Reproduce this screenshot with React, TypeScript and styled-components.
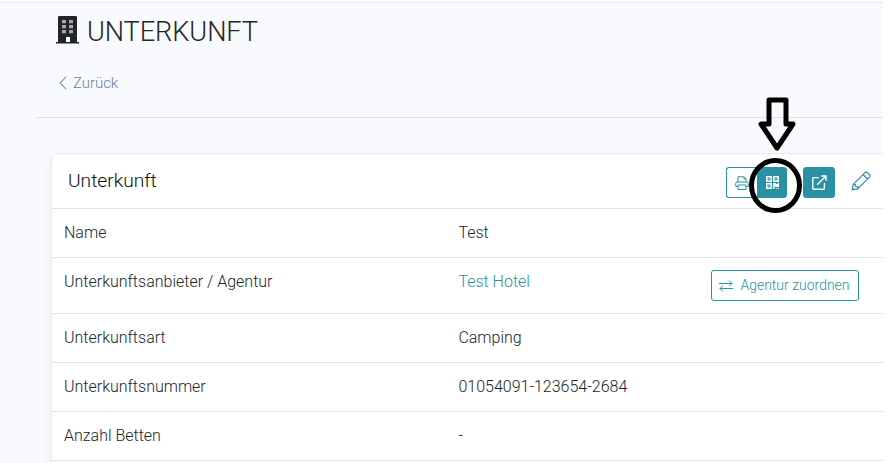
import React from 'react';
import styled, { createGlobalStyle, css } from 'styled-components';
import { BsChevronLeft } from 'react-icons/bs';

const teal = '#2a91a5';
const line = '#dee2e6';

const GlobalStyle = createGlobalStyle`
  * { box-sizing: border-box; }
  body {
    margin: 0;
    background: #fff;
    color: #212529;
    font: 300 16px/24px Roboto, sans-serif;
    overflow: hidden;
  }
`;

const Page = styled.main`
  width: 883px;
  height: 463px;
  padding: 2px 0 0 36px;
  background: linear-gradient(#e1e9f4 0 1px, #f9fafd 1px) 0 2px no-repeat, #f9fafd;
  overflow: hidden;
`;

const Heading = styled.h1`
  display: flex;
  align-items: center;
  gap: 8px;
  height: 56px;
  margin: 0;
  padding-left: 20px;
  font-size: 27.2px;
  font-weight: 300;
  line-height: 34px;
  svg { flex: none; }
`;

const HeadingText = styled.span`
  padding-top: 3px;
  letter-spacing: -0.1px;
`;

const BackBar = styled.nav`
  display: flex;
  height: 60px;
  padding: 13px 0 0 19px;
  border-bottom: 1px solid ${line};
`;

const BackLink = styled.a`
  display: flex;
  align-items: center;
  gap: 2px;
  height: 24px;
  color: #6b7f9e;
  font-size: 15px;
  letter-spacing: -0.05px;
`;

const Card = styled.section`
  position: relative;
  margin: 35px -10px 0 15px;
  height: 330px;
  border: 1px solid #e3eaf4;
  border-radius: 6px 0 0 0;
  background: #fff;
  box-shadow: 0 7px 14px rgba(65, 69, 88, 0.06), 0 3px 6px rgba(0, 0, 0, 0.02);
`;

const CardHeader = styled.header`
  display: flex;
  justify-content: space-between;
  height: 55px;
  padding: 13px 21px 0 16px;
  border-bottom: 1px solid ${line};
`;

const CardTitle = styled.h2`
  margin: 2px 0 0;
  font-size: 19.2px;
  font-weight: 300;
  line-height: 24px;
  color: #0b0b0b;
`;

const Actions = styled.div`
  display: flex;
  align-items: flex-start;
`;

const button = css`
  display: flex;
  align-items: center;
  justify-content: center;
  height: 31px;
  padding: 0;
  border: 1px solid ${teal};
  border-radius: 3px;
  font: 300 14px/21px Roboto, sans-serif;
`;

const IconButton = styled.button<{ $filled?: boolean; $joined?: 'left' | 'right' }>`
  ${button}
  width: ${p => (p.$joined === 'right' ? 30 : p.$joined === 'left' ? 31 : 32)}px;
  color: ${p => (p.$filled ? '#fff' : teal)};
  background: ${p => (p.$filled ? teal : '#fff')};
  ${p => p.$joined === 'left' && 'border-radius: 3px 0 0 3px; border-right: 0;'}
  ${p => p.$joined === 'right' && 'border-radius: 0 3px 3px 0; margin-right: 16px;'}
`;

const EditButton = styled.button`
  display: flex;
  margin: 4px 0 0 16px;
  padding: 0;
  border: 0;
  background: none;
  color: ${teal};
`;

const Row = styled.div<{ $tall?: boolean }>`
  display: grid;
  grid-template-columns: 394.4px 252.6px 148px;
  align-items: start;
  height: ${p => (p.$tall ? 56 : 49)}px;
  padding: 12px 0 0 12px;
  border-bottom: 1px solid ${line};
`;

const Value = styled.span<{ $link?: boolean }>`
  color: ${p => (p.$link ? teal : 'inherit')};
`;

const AssignButton = styled.button`
  ${button}
  gap: 6px;
  width: 148px;
  padding-right: 2px;
  color: ${teal};
  background: #fff;
`;

const Annotation = styled.svg`
  position: absolute;
  left: 696px;
  top: -60px;
  pointer-events: none;
`;

const BuildingIcon = () => (
  <svg width="23" height="28" viewBox="0 0 23 28">
    <path fill="#212529" d="M2 1q0-1 1-1h17q1 0 1 1v25h2v1.5H0V26h2z" />
    <path fill="#fff" d="M10 21h4v5h-4z" />
    <path fill="#a9a6a4" d="M6 4h4v3.2H6zM13 4h4v3.2h-4zM6 9h4v3.2H6zM13 9h4v3.2h-4zM6 14h4v3.2H6zM13 14h4v3.2h-4z" />
  </svg>
);

const PrinterIcon = () => (
  <svg width="14" height="14" viewBox="0 0 14 14" fill="none" stroke="currentColor" strokeWidth="1">
    <path d="M3 6V.8h6l2 2V6M9 .8v2h2M3 10.5H.8V7.3q0-1.3 1.3-1.3h9.8q1.3 0 1.3 1.3v3.2H11M3 9h8v4.5H3z" />
  </svg>
);

const QrIcon = () => (
  <svg width="13" height="13" viewBox="0 0 13 13" fill="none" stroke="currentColor">
    <path strokeWidth="1.5" d="M.8.8h4.4v4.4H.8zM7.8.8h4.4v4.4H7.8zM.8 7.8h4.4v4.4H.8z" />
    <path fill="currentColor" stroke="none" d="M2.5 2.5h1v1h-1zM9.5 2.5h1v1h-1zM2.5 9.5h1v1h-1zM7 7h3v1h1.5V7H13v4H9.2v-.8h-.7V13H7zM10 11.9h1V13h-1zM12 11.9h1V13h-1z" />
  </svg>
);

const ExternalIcon = () => (
  <svg width="16" height="16" viewBox="0 0 16 16" fill="none" stroke="currentColor" strokeWidth="1.4">
    <path d="M8 2.6H2.8q-1 0-1 1v9.6q0 1 1 1h9.6q1 0 1-1V8M6.2 9.8l8.5-8.5M10.2 1h4.8v4.8" />
  </svg>
);

const PencilIcon = () => (
  <svg width="20" height="20" viewBox="0 0 20 20" fill="none" stroke="currentColor" strokeWidth="1.2" strokeLinejoin="round">
    <path d="M1 19l1.2-5.7L13.9 1.6q1.3-1.2 2.6 0l1.9 1.9q1.2 1.3 0 2.6L6.7 17.8zM2.2 13.3l2.1.2.3 2 2 .3.1 2M12 3.5L16.5 8" />
    <path fill="currentColor" stroke="none" d="M1 19l.6-2.6 2 2z" />
  </svg>
);

const SwapIcon = () => (
  <svg width="16" height="14" viewBox="0 0 16 14" fill="none" stroke="currentColor">
    <path d="M1 4.5h13M11 1.5l3 3-3 3M15 9.5H2M5 6.5l-3 3 3 3" />
  </svg>
);

const rows = [
  { label: 'Name', value: 'Test' },
  { label: 'Unterkunftsanbieter / Agentur', value: 'Test Hotel', assign: true },
  { label: 'Unterkunftsart', value: 'Camping' },
  { label: 'Unterkunftsnummer', value: '01054091-123654-2684' },
  { label: 'Anzahl Betten', value: '-' },
];

export default function App() {
  return (
    <>
      <GlobalStyle />
      <Page>
        <Heading><BuildingIcon /><HeadingText>UNTERKUNFT</HeadingText></Heading>
        <BackBar><BackLink><BsChevronLeft size={16} />Zurück</BackLink></BackBar>
        <Card>
          <CardHeader>
            <CardTitle>Unterkunft</CardTitle>
            <Actions>
              <IconButton $joined="left" aria-label="Drucken"><PrinterIcon /></IconButton>
              <IconButton $filled $joined="right" aria-label="QR-Code"><QrIcon /></IconButton>
              <IconButton $filled aria-label="Öffnen"><ExternalIcon /></IconButton>
              <EditButton aria-label="Bearbeiten"><PencilIcon /></EditButton>
            </Actions>
          </CardHeader>
          {rows.map(row => (
            <Row key={row.label} $tall={row.assign}>
              <span>{row.label}</span>
              <Value $link={row.assign}>{row.value}</Value>
              {row.assign && <AssignButton><SwapIcon />Agentur zuordnen</AssignButton>}
            </Row>
          ))}
          <Annotation width="60" height="124" viewBox="748 94 60 124" fill="none" stroke="#000">
            <path strokeWidth="5" strokeLinejoin="round" d="M769 100h17v24h7l-16 24-16-24h8z" />
            <ellipse cx="775.5" cy="185.5" rx="24" ry="25" strokeWidth="5" />
          </Annotation>
        </Card>
      </Page>
    </>
  );
}
